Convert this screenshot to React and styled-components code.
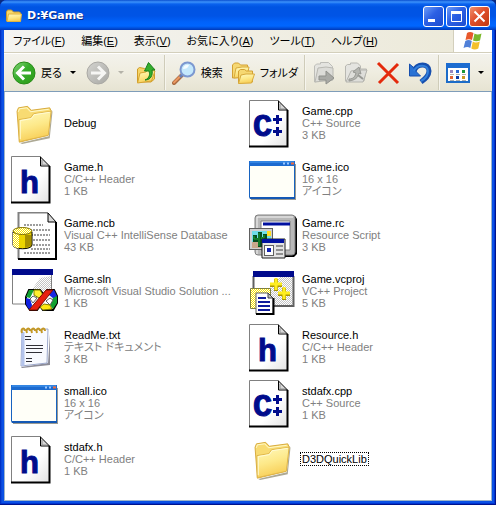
import React from "react";
import styled, { createGlobalStyle } from "styled-components";

const GlobalStyle = createGlobalStyle`
  * {
    box-sizing: border-box;
  }
  body {
    margin: 0;
    background: #0a2a80;
    font-family: "Liberation Sans", "Noto Sans CJK JP", sans-serif;
    font-size: 11px;
    font-feature-settings: "palt";
    color: #000;
  }
  button {
    font: inherit;
    font-feature-settings: inherit;
    color: inherit;
    background: none;
    border: 0;
    padding: 0;
    cursor: default;
  }
`;

const Window = styled.div`
  display: flex;
  flex-direction: column;
  min-height: 100vh;
  padding: 0 4px 4px;
  background: #0a50e4;
  border-radius: 7px 7px 0 0;
  box-shadow: inset -1px -1px #00138c, inset 1px 0 #0031c4,
    inset -2px -2px #0034d0, inset 2px 0 #0a46d8;
`;

const TitleBar = styled.header`
  display: flex;
  align-items: center;
  height: 30px;
  margin: 0 -4px;
  padding: 2px 6px 0;
  border-radius: 7px 7px 0 0;
  background: linear-gradient(
    180deg,
    #0a4fd0 0,
    #3c92fb 2px,
    #0a62ee 4px,
    #0054e3 7px,
    #0054e6 16px,
    #0062fb 22px,
    #0066ff 26px,
    #0050dc 28px,
    #0038b8 30px
  );
`;

const Title = styled.h1`
  flex: 1;
  margin: 0 0 0 5px;
  font: bold 11px/16px "DejaVu Sans", sans-serif;
  color: #fff;
  text-shadow: 1px 1px #0a2a80;
`;

const CaptionButtons = styled.div`
  display: flex;
  gap: 2px;
`;

const CaptionButton = styled.button`
  width: 21px;
  height: 21px;
  border: 1px solid #fff;
  border-radius: 3px;
  background: ${(props) =>
    props.$close
      ? "linear-gradient(135deg, #f0906c, #e0502c 45%, #c03810)"
      : "linear-gradient(135deg, #6c9cf8, #2c60e4 45%, #1c4cd0)"};
  svg {
    display: block;
  }
`;

const MenuRow = styled.nav`
  display: flex;
  height: 23px;
  background: linear-gradient(90deg, #f4f4f2, #ece9d8);
  border-bottom: 1px solid #d3cfbc;
`;

const MenuList = styled.div`
  display: flex;
  flex: 1;
  align-items: center;
  padding-left: 1px;
`;

const MenuItem = styled.button`
  padding: 0 8px;
  line-height: 18px;
  white-space: nowrap;
`;

const Throbber = styled.div`
  display: flex;
  align-items: center;
  justify-content: center;
  width: 39px;
  background: #fff;
  border-left: 1px solid #d3cfbc;
`;

const ToolBar = styled.div`
  display: flex;
  align-items: center;
  gap: 2px;
  height: 39px;
  padding-left: 5px;
  background: linear-gradient(180deg, #f3f2ec, #efede0 50%, #e6e3d2);
  border-top: 1px solid #fff;
  border-bottom: 1px solid #7f9db9;
`;

const ToolGroup = styled.div`
  display: flex;
  align-items: center;
`;

const ToolButton = styled.button`
  display: flex;
  align-items: center;
  gap: 5px;
  height: 34px;
  padding: 0 3px;
  line-height: 16px;
  white-space: nowrap;
`;

const DropButton = styled.button`
  display: flex;
  align-items: center;
  justify-content: center;
  width: 16px;
  height: 34px;
  &::before {
    content: "";
    border: 3px solid transparent;
    border-top-color: ${(props) => (props.disabled ? "#b4b2a8" : "#000")};
    border-bottom: 0;
  }
`;

const Separator = styled.div`
  width: 2px;
  height: 35px;
  margin: 0 1px;
  background: #cfccb9;
  border-right: 1px solid #f6f5ee;
`;

const FileArea = styled.main`
  flex: 1;
  padding: 4px 0 8px 6px;
  background: #fff;
  border: 1px solid #9db4c8;
  border-top: 0;
`;

const FileGrid = styled.ul`
  display: grid;
  grid-template-columns: repeat(auto-fill, 238px);
  margin: 0;
  padding: 0;
  list-style: none;
`;

const FileTile = styled.button`
  display: flex;
  align-items: center;
  gap: 4px;
  width: 100%;
  height: 56px;
  text-align: left;
  outline: none;
  svg {
    flex: none;
  }
`;

const FileText = styled.span`
  display: flex;
  flex-direction: column;
  align-items: flex-start;
  min-width: 0;
  padding: 0 4px 2px 0;
`;

const FileName = styled.span`
  padding: 0 1px;
  line-height: 12px;
  outline: ${(props) => (props.$focused ? "1px dotted #000" : "none")};
`;

const FileInfo = styled.span`
  max-width: 100%;
  padding: 0 1px;
  overflow: hidden;
  line-height: 12px;
  color: #808080;
  text-overflow: ellipsis;
  white-space: nowrap;
`;

function Gradients() {
  return (
    <svg width="0" height="0" style={{ display: "block" }} aria-hidden="true">
      <defs>
        <linearGradient id="folder" x1="0" y1="0" x2="0.3" y2="1">
          <stop offset="0" stopColor="#fffac0" />
          <stop offset="0.55" stopColor="#fde98a" />
          <stop offset="1" stopColor="#f8cf58" />
        </linearGradient>
        <linearGradient id="green" x1="0" y1="0" x2="1" y2="1">
          <stop offset="0" stopColor="#8ad67c" />
          <stop offset="0.45" stopColor="#37ad2c" />
          <stop offset="1" stopColor="#2f9c18" />
        </linearGradient>
        <linearGradient id="gray" x1="0" y1="0" x2="1" y2="1">
          <stop offset="0" stopColor="#d4d4d0" />
          <stop offset="1" stopColor="#a8a8a4" />
        </linearGradient>
        <linearGradient id="page" x1="0" y1="0" x2="1" y2="1">
          <stop offset="0.6" stopColor="#fff" />
          <stop offset="1" stopColor="#e2e2e2" />
        </linearGradient>
        <pattern id="dither" width="2" height="2" patternUnits="userSpaceOnUse">
          <rect width="2" height="2" fill="#fff" />
          <rect width="1" height="1" fill="#c4c4c4" />
          <rect x="1" y="1" width="1" height="1" fill="#c4c4c4" />
        </pattern>
        <pattern id="yellow" width="2" height="2" patternUnits="userSpaceOnUse">
          <rect width="2" height="2" fill="#fff" />
          <rect width="1" height="1" fill="#f8e400" />
          <rect x="1" y="1" width="1" height="1" fill="#f8e400" />
        </pattern>
      </defs>
    </svg>
  );
}

function SmallFolder() {
  return (
    <svg width="16" height="16" viewBox="0 0 16 16">
      <path d="M.5 13V4l1-2h4l2 2h6l1 1v8z" fill="#f8d868" stroke="#c89a30" />
      <path d="M1 13.500L2.500 6h13L14.500 13.500z" fill="url(#folder)" stroke="#e0b440" />
    </svg>
  );
}

function FolderIcon() {
  return (
    <svg width="48" height="48" viewBox="0 0 48 48">
      <g transform="translate(1 0) scale(0.92 0.98)">
        <path d="M9 44l31-7 3-27 1 2-3 27-30 6z" fill="#8a8468" opacity="0.7" />
        <path
          d="M5.500 11.500L7 8l10-1.500 4 4 20-2.500 1.500 3L39 36 8 43z"
          fill="#f8db72"
          stroke="#d6a93a"
        />
        <path d="M7 12l1-3 8-1 4 4 20-2.500" fill="none" stroke="#fffbd0" />
        <path
          d="M8 42.500L7.500 20l13-2 3-4 19-2.500L39.500 36z"
          fill="url(#folder)"
          stroke="#dfb548"
        />
        <path d="M9 40V21l12-2 3-4 17-2.500" fill="none" stroke="#fffcd8" />
      </g>
    </svg>
  );
}

function CodePage({ kind }) {
  return (
    <svg width="48" height="48" viewBox="0 0 48 48">
      <path d="M1 1h29l8 9v37H1z" fill="url(#page)" />
      <path d="M.5 47V.5H30" fill="none" stroke="#808080" />
      <path d="M0 46.500h38.500V10" fill="none" stroke="#000" strokeWidth="2" />
      <path d="M29.500 1v9h9z" fill="#d8d8d8" stroke="#000" />
      <path d="M31 4v5h5" fill="none" stroke="#909090" />
      {kind === "h" ? (
        <text
          x="9"
          y="37"
          fill="#000c8c"
          stroke="#000c8c"
          fontFamily="Liberation Sans"
          fontWeight="bold"
          fontSize="31"
        >
          h
        </text>
      ) : (
        <g fill="#000c8c" fontWeight="bold" stroke="#000c8c">
          <text x="4" y="36" fontFamily="Liberation Mono" fontSize="32">
            C
          </text>
          <path d="M28.500 15v9M24 19.500h9M28.500 27v9M24 31.500h9" strokeWidth="3" />
        </g>
      )}
    </svg>
  );
}

function IcoIcon() {
  return (
    <svg width="48" height="48" viewBox="0 0 48 48">
      <path d="M2 8h45v36H2z" fill="#9a9a92" />
      <rect x="0.500" y="5.500" width="45" height="37" rx="1" fill="#fffff8" stroke="#1763c0" />
      <path d="M0 5h46v5H0z" fill="#1c6bd0" />
      <path d="M1 6h44" stroke="#4aa0f4" />
      <path d="M34 7.500h2M38 7.500h2" stroke="#9cc8ff" strokeWidth="2" />
      <path d="M42 7.500h3" stroke="#f06a3c" strokeWidth="2" />
      <path d="M1 42h45" stroke="#1458b4" strokeWidth="2" />
    </svg>
  );
}

function NcbIcon() {
  return (
    <svg width="48" height="48" viewBox="0 0 48 48">
      <path d="M7 0h30l8 9v38H7z" fill="#fff" />
      <path d="M7.500 47V.5H37" fill="none" stroke="#808080" strokeWidth="2" />
      <path d="M7 47h38V10" fill="none" stroke="#000" strokeWidth="2" />
      <path d="M37 1v9h8z" fill="#d8d8d8" stroke="#000" />
      <path
        d="M13 13h19M13 18h26M20 23h19M22 28h17M22 33h17M20 37h19M13 41h26"
        stroke="#9c9c9c"
        strokeWidth="2"
        strokeDasharray="2 1"
      />
      <path d="M2 20v13c0 5 19 5 19 0V20z" fill="#ecd400" stroke="#000" />
      <path d="M2 21v12c0 2 3 3 6 3.500V22z" fill="url(#yellow)" />
      <path d="M14 23h6v11l-6 2z" fill="#a89000" />
      <ellipse cx="11.500" cy="19" rx="9.500" ry="3.500" fill="url(#yellow)" stroke="#807000" />
    </svg>
  );
}

function SlnIcon() {
  return (
    <svg width="48" height="48" viewBox="0 0 48 48">
      <path d="M2 1h39v35H2z" fill="#fff" />
      <path d="M41 8v20L18 36 14 30l8-10 7-10z" fill="url(#dither)" />
      <path d="M1.500 7v29H15M40.500 7v16" fill="none" stroke="#808080" />
      <path d="M1 1h41v6H1z" fill="#000a8c" />
      <path
        d="M18 22h11l4 5 3-5h7l3 6v7l-4 7H32l-3-4-3 4h-7l-4-6v-7z"
        fill="#fff"
        stroke="#000"
        strokeWidth="2"
      />
      <path d="M18 22h5l-4 8-4-1z" fill="#10a030" />
      <path d="M23 22h6l3 5-4 3-5-3z" fill="#fff030" stroke="#808000" />
      <path d="M15 30l4 1 2 6-1 5-3-2-2-4z" fill="#1020e0" />
      <path d="M19 31l3-3 4 2-4 5z" fill="#fff" stroke="#606060" />
      <path d="M37 22h6l3 6-3 3-5-4z" fill="#1828e0" />
      <path d="M42 30l4-2v7l-4 6-3-4z" fill="#10a030" />
      <path d="M35 33l4-3 3 2-3 5z" fill="#fff" stroke="#606060" />
      <path d="M33 36l6 1 2 4-9 1-3-3z" fill="#ffe810" stroke="#808000" />
      <path d="M18 42L35 22h7L26 42z" fill="#e82010" stroke="#801000" />
    </svg>
  );
}

function TextIcon() {
  return (
    <svg width="48" height="48" viewBox="0 0 48 48">
      <path d="M11 44l28-3V10l-2 29-27 4z" fill="#8c8c98" />
      <path d="M11 6l26-1-1 34-26 3z" fill="#f8faff" stroke="#9ca8cc" />
      <path d="M10.500 8v34l3-.5V8z" fill="#b4c4ec" />
      <path
        d="M14 12.500h6M14 15.500h6M15 21.500h17M15 24.500h17M15 28.500h16M15 34.500h6M15 37.500h6"
        stroke="#303038"
      />
      <path
        d="M11 9c-2-5 3-6 3-2M16 9c-2-5 3-6 3-2M21 9c-2-5 3-6 3-2M26 9c-2-5 3-6 3-2M31 9c-2-5 3-6 3-2"
        fill="none"
        stroke="#c49824"
        strokeWidth="2"
      />
    </svg>
  );
}

function RcIcon() {
  return (
    <svg width="48" height="48" viewBox="0 0 48 48">
      <path d="M9 4h37l2 3v35l-3 3H14l-7-9V6z" fill="#000" />
      <rect x="6" y="3" width="40" height="40" rx="3" fill="#b8b8b8" stroke="#808080" />
      <path d="M8 42V5h36" fill="none" stroke="#f4f4f4" />
      <path d="M12 9h29v29H12z" fill="#fff" stroke="#808080" />
      <path d="M14 12h27" stroke="#0010a0" strokeWidth="3" />
      <rect x="0.500" y="16.500" width="23" height="21" fill="#d0d0d0" stroke="#606060" />
      <path d="M3 19h19v11H3z" fill="#70dce8" />
      <path d="M3 30h19v6H3z" fill="#caa88c" />
      <path d="M18 19h4v5h-4z" fill="#ffdc20" />
      <path
        d="M11 35V20M6 23v5h5M16 22v5h-5"
        fill="none"
        stroke="#064c20"
        strokeWidth="4"
      />
      <path d="M10 34V21M5 24v3h4M15 23v3h-3" fill="none" stroke="#20a830" />
      <path d="M13 46V27h23v19z" fill="#e4e4e4" stroke="#202020" />
      <path d="M13 29h22" stroke="#0010a0" strokeWidth="4" />
      <rect x="15.500" y="33.500" width="9" height="10" fill="#fff" stroke="#606060" />
      <path d="M18 36h4v4h-4z" fill="#1020b0" />
      <path d="M27 34h7M27 38h7M27 42h7" stroke="#909090" strokeWidth="2" />
    </svg>
  );
}

function VcprojIcon() {
  return (
    <svg width="48" height="48" viewBox="0 0 48 48">
      <path d="M4 3h41v34H4z" fill="url(#dither)" />
      <path d="M5 9h26L14 28H5z" fill="#fff" />
      <path d="M4.500 8v30H44.500V8" fill="none" stroke="#606060" strokeWidth="2" />
      <path d="M4 3h41v6H4z" fill="#000a8c" />
      <path
        d="M27 11v12M21 17h12M35 20v12M29 26h12"
        stroke="#a89400"
        strokeWidth="4"
      />
      <path d="M27 10v12M21 16h12M35 19v12M29 25h12" stroke="#ffee20" strokeWidth="3" />
      <path d="M1.500 20.500h20v20h-20z" fill="url(#yellow)" stroke="#808040" />
      <path d="M7 25h12l5 5v16H7z" fill="#fff" stroke="#606060" />
      <path d="M7 46h17.500V30" fill="none" stroke="#000" strokeWidth="2" />
      <path d="M19 25v5h5z" fill="#c0c0c0" stroke="#404040" />
      <path d="M9 30h8M9 34h12M9 38h12M9 42h12" stroke="#101c9c" strokeWidth="2" />
    </svg>
  );
}

function BackIcon() {
  return (
    <svg width="24" height="24" viewBox="0 0 24 24">
      <circle cx="12" cy="12" r="11" fill="url(#green)" stroke="#288c18" />
      <path d="M19 12H6M12 5.500L5.500 12l6.500 6.500" fill="none" stroke="#fff" strokeWidth="3" />
    </svg>
  );
}

function ForwardIcon() {
  return (
    <svg width="24" height="24" viewBox="0 0 24 24">
      <circle cx="12" cy="12" r="11" fill="url(#gray)" stroke="#aaa9a4" />
      <path d="M5 12h13M12 5.500l6.500 6.500-6.500 6.500" fill="none" stroke="#f6f6f4" strokeWidth="3" />
    </svg>
  );
}

function UpIcon() {
  return (
    <svg width="24" height="24" viewBox="0 0 24 24">
      <path d="M3.500 21V8l2-1.500 5 1 2 2 8-1.500v10L17 21z" fill="#f6d566" stroke="#cf9c28" />
      <path d="M3.500 22L6 12l6-1 2-2 7 1-3.500 10z" fill="url(#folder)" stroke="#d6a432" />
      <path
        d="M11 19c5-2 5-6 4-9h-4.500L14.500 1.500 21 9h-3c1 5-1 10-7 10z"
        fill="#35ae2c"
        stroke="#18801c"
      />
    </svg>
  );
}

function SearchIcon() {
  return (
    <svg width="24" height="24" viewBox="0 0 24 24">
      <path d="M2 22l9-9" stroke="#a86a40" strokeWidth="4" strokeLinecap="round" />
      <path d="M2 21.500l8-8" stroke="#ec9860" strokeWidth="2" strokeLinecap="round" />
      <path d="M8 16l4-4" stroke="#6880b8" strokeWidth="3" />
      <circle cx="15.500" cy="8.500" r="7" fill="#c4e8fc" stroke="#7c98d0" strokeWidth="2" />
      <path d="M11 8c0-3 3-5 6-4-1 3-3 4-6 4z" fill="#f4fcff" />
    </svg>
  );
}

function FoldersIcon() {
  return (
    <svg width="24" height="24" viewBox="0 0 24 24">
      <path d="M1.500 17V4l2-2h4l2 2h7v12z" fill="#f6d872" stroke="#d3a032" />
      <path d="M3 17L5 7l6-1h7l-2 10z" fill="url(#folder)" stroke="#d8aa3c" />
      <path d="M7.500 22V10l2-1.500h4l2 1.500h6v11z" fill="#f6d872" stroke="#d3a032" />
      <path d="M7.500 22.500L10 14l5-1h8.500l-3 9z" fill="url(#folder)" stroke="#d8aa3c" />
    </svg>
  );
}

function MoveToIcon() {
  return (
    <svg width="24" height="24" viewBox="0 0 24 24">
      <path d="M2.500 21V5l2-2h4V1.500h8l4 4V17z" fill="#e4e4e0" stroke="#bdbdb8" />
      <path d="M3 21L6 7l8-1 7 1v12z" fill="#dcdcd8" stroke="#b8b8b2" />
      <path d="M7 15h7v-5l8 7-8 6v-4H7z" fill="#a9aaa6" stroke="#90918c" />
    </svg>
  );
}

function CopyToIcon() {
  return (
    <svg width="24" height="24" viewBox="0 0 24 24">
      <path d="M1.500 20V5l2-1.500h3V2h7l3 3v3h6L20 20z" fill="#e4e4e0" stroke="#b8b8b2" />
      <path d="M2 21L7 10l6-1h10l-4 12z" fill="#dededa" stroke="#b4b4ae" />
      <path
        d="M5 18c5 0 6-3 7-6l-3-1 6-5 2 7-2-1c-1 5-4 7-10 8z"
        fill="#b4b5b0"
        stroke="#989994"
      />
      <path d="M14 14l5 4" stroke="#989994" strokeWidth="2" />
    </svg>
  );
}

function DeleteIcon() {
  return (
    <svg width="24" height="24" viewBox="0 0 24 24">
      <path d="M2 2l20 20M22 3L3 22" stroke="#e42a0c" strokeWidth="3" />
    </svg>
  );
}

function UndoIcon() {
  return (
    <svg width="24" height="24" viewBox="0 0 24 24">
      <path
        d="M6 10c3-8 15-8 15 0 0 5-4 8-8 11"
        fill="none"
        stroke="#174fae"
        strokeWidth="5"
      />
      <path d="M1.500 3v12h11l-4-4L5 6z" fill="#2a72d4" stroke="#174fae" />
      <path
        d="M6 10c3-7 14-7 14 0 0 5-3 8-7 10"
        fill="none"
        stroke="#3280dc"
        strokeWidth="2"
      />
    </svg>
  );
}

function ViewsIcon() {
  const colors = ["#9888c0", "#2c68d4", "#189838", "#e46434", "#0c3ca4", "#c89820"];
  return (
    <svg width="24" height="24" viewBox="0 0 24 24">
      <rect x="1" y="3" width="22" height="18" fill="#fff" stroke="#1c6cc8" strokeWidth="2" />
      <path d="M0 4.500h24" stroke="#1c6cd0" strokeWidth="5" />
      {colors.map((color, index) => (
        <g key={color} transform={`translate(${4 + (index % 3) * 6} ${index < 3 ? 9 : 15})`}>
          <rect width="3" height="3" fill={color} />
          <path d="M0 4.500h4" stroke="#b0b0b0" />
        </g>
      ))}
    </svg>
  );
}

function WindowsFlag() {
  return (
    <svg width="20" height="20" viewBox="0 0 20 20">
      <path d="M4 2c2-1.500 4-1.500 6.500 0L9 9C7 8 5 8 2.500 9z" fill="#e8582c" />
      <path d="M11.500 2.500c2.500 1.500 4.500 1 7 0L17 9.500c-2.500 1-5 1-7 0z" fill="#7cb82c" />
      <path d="M2.300 10c2.500-1.500 4.500-1 6.500 0l-1.500 7c-2-1.500-4-1.500-6.800 0z" fill="#5080d8" />
      <path d="M9.800 10.500c2 1.500 4.500 1 7 0l-1.500 7c-3 1.500-5 1-7 0z" fill="#f4c02c" />
    </svg>
  );
}

const menus = [
  ["ファイル", "F"],
  ["編集", "E"],
  ["表示", "V"],
  ["お気に入り", "A"],
  ["ツール", "T"],
  ["ヘルプ", "H"],
];

const headerIcon = <CodePage kind="h" />;
const sourceIcon = <CodePage kind="cpp" />;

const files = [
  { name: "Debug", icon: <FolderIcon /> },
  { name: "Game.cpp", icon: sourceIcon, info: ["C++ Source", "3 KB"] },
  { name: "Game.h", icon: headerIcon, info: ["C/C++ Header", "1 KB"] },
  { name: "Game.ico", icon: <IcoIcon />, info: ["16 x 16", "アイコン"] },
  {
    name: "Game.ncb",
    icon: <NcbIcon />,
    info: ["Visual C++ IntelliSense Database", "43 KB"],
  },
  { name: "Game.rc", icon: <RcIcon />, info: ["Resource Script", "3 KB"] },
  {
    name: "Game.sln",
    icon: <SlnIcon />,
    info: ["Microsoft Visual Studio Solution ...", "1 KB"],
  },
  { name: "Game.vcproj", icon: <VcprojIcon />, info: ["VC++ Project", "5 KB"] },
  { name: "ReadMe.txt", icon: <TextIcon />, info: ["テキスト ドキュメント", "3 KB"] },
  { name: "Resource.h", icon: headerIcon, info: ["C/C++ Header", "1 KB"] },
  { name: "small.ico", icon: <IcoIcon />, info: ["16 x 16", "アイコン"] },
  { name: "stdafx.cpp", icon: sourceIcon, info: ["C++ Source", "1 KB"] },
  { name: "stdafx.h", icon: headerIcon, info: ["C/C++ Header", "1 KB"] },
  { name: "D3DQuickLib", icon: <FolderIcon />, focused: true },
];

function renderFile(file) {
  return (
    <li key={file.name}>
      <FileTile>
        {file.icon}
        <FileText>
          <FileName $focused={file.focused}>{file.name}</FileName>
          {file.info && file.info.map((line) => <FileInfo key={line}>{line}</FileInfo>)}
        </FileText>
      </FileTile>
    </li>
  );
}

export default function App() {
  return (
    <>
      <GlobalStyle />
      <Gradients />
      <Window>
        <TitleBar>
          <SmallFolder />
          <Title>D:¥Game</Title>
          <CaptionButtons>
            <CaptionButton aria-label="Minimize">
              <svg width="19" height="19" viewBox="0 0 19 19">
                <path d="M4 13.500h7" stroke="#fff" strokeWidth="3" />
              </svg>
            </CaptionButton>
            <CaptionButton aria-label="Maximize">
              <svg width="19" height="19" viewBox="0 0 19 19">
                <path d="M4.500 5v9.500h10V5" fill="none" stroke="#fff" />
                <path d="M4 5.500h11" stroke="#fff" strokeWidth="3" />
              </svg>
            </CaptionButton>
            <CaptionButton $close aria-label="Close">
              <svg width="19" height="19" viewBox="0 0 19 19">
                <path d="M4.500 4.500l10 10M14.500 4.500l-10 10" stroke="#fff" strokeWidth="2" />
              </svg>
            </CaptionButton>
          </CaptionButtons>
        </TitleBar>
        <MenuRow>
          <MenuList>
            {menus.map(([label, key]) => (
              <MenuItem key={key}>
                {label}(<u>{key}</u>)
              </MenuItem>
            ))}
          </MenuList>
          <Throbber>
            <WindowsFlag />
          </Throbber>
        </MenuRow>
        <ToolBar>
          <ToolGroup>
            <ToolButton>
              <BackIcon />
              戻る
            </ToolButton>
            <DropButton aria-label="Back history" />
          </ToolGroup>
          <ToolGroup>
            <ToolButton disabled aria-label="Forward">
              <ForwardIcon />
            </ToolButton>
            <DropButton disabled aria-label="Forward history" />
          </ToolGroup>
          <ToolButton aria-label="Up">
            <UpIcon />
          </ToolButton>
          <Separator />
          <ToolButton>
            <SearchIcon />
            検索
          </ToolButton>
          <ToolButton>
            <FoldersIcon />
            フォルダ
          </ToolButton>
          <Separator />
          <ToolButton disabled aria-label="Move to">
            <MoveToIcon />
          </ToolButton>
          <ToolButton disabled aria-label="Copy to">
            <CopyToIcon />
          </ToolButton>
          <ToolButton aria-label="Delete">
            <DeleteIcon />
          </ToolButton>
          <ToolButton aria-label="Undo">
            <UndoIcon />
          </ToolButton>
          <Separator />
          <ToolGroup>
            <ToolButton aria-label="Views">
              <ViewsIcon />
            </ToolButton>
            <DropButton aria-label="View options" />
          </ToolGroup>
        </ToolBar>
        <FileArea>
          <FileGrid>{files.map(renderFile)}</FileGrid>
        </FileArea>
      </Window>
    </>
  );
}
